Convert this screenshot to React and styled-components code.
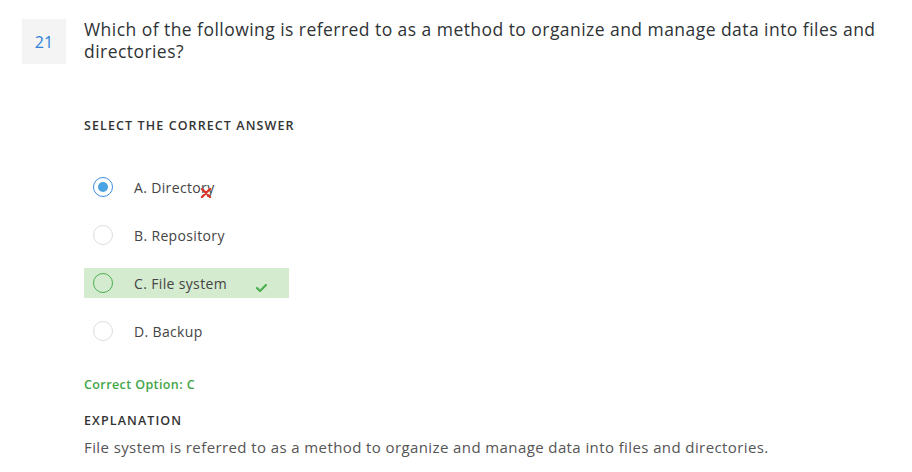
import React from "react";
import styled, { createGlobalStyle } from "styled-components";

const GlobalStyle = createGlobalStyle`
  body {
    margin: 0;
    background: #fff;
    font-family: "Open Sans", "Liberation Sans", sans-serif;
    color: #333;
  }
`;

const Page = styled.div`
  display: flex;
  gap: 18px;
  padding: 19px 0 0 22px;
`;

const NumberBox = styled.div`
  flex: 0 0 44px;
  height: 45px;
  background: #f4f4f4;
  color: #2f80d8;
  font-size: 16px;
  display: flex;
  align-items: center;
  justify-content: center;
`;

const Body = styled.div`
  flex: 1;
  padding-right: 24px;
`;

const Question = styled.div`
  font-size: 17.5px;
  line-height: 22px;
  letter-spacing: 0.45px;
  color: #2f3336;
  margin-top: -1px;
`;

const Label = styled.div`
  font-size: 12.5px;
  font-weight: 600;
  letter-spacing: 1.1px;
  text-transform: uppercase;
  color: #333;
  margin-top: ${(p) => p.top}px;
`;

const Options = styled.div`
  display: flex;
  flex-direction: column;
  gap: 18px;
  margin-top: 38px;
`;

const Option = styled.div`
  position: relative;
  display: flex;
  align-items: center;
  gap: 21px;
  width: 205px;
  height: 30px;
  padding-left: 9px;
  box-sizing: border-box;
  background: ${(p) => (p.correct ? "#d5ebd0" : "transparent")};
`;

const Radio = styled.span`
  width: 20px;
  height: 20px;
  box-sizing: border-box;
  border-radius: 50%;
  border: 1.5px solid ${(p) => (p.state === "selected" ? "#3a8fe4" : p.state === "correct" ? "#4caf50" : "#ddd")};
  display: flex;
  align-items: center;
  justify-content: center;
  &::after {
    content: "";
    width: 10px;
    height: 10px;
    border-radius: 50%;
    background: ${(p) => (p.state === "selected" ? "#4aa3e2" : "transparent")};
  }
`;

const OptionText = styled.span`
  font-size: 14px;
  letter-spacing: 0.35px;
  color: #444;
  position: relative;
`;

const Mark = styled.svg`
  position: absolute;
`;

const CorrectOption = styled.div`
  margin-top: 30px;
  font-size: 12.5px;
  font-weight: 600;
  color: #3fa648;
  letter-spacing: 0.4px;
`;

const Explanation = styled.div`
  margin-top: 8px;
  font-size: 15px;
  letter-spacing: 0.4px;
  color: #555;
`;

const options = [
  { key: "A", text: "Directory", state: "selected", wrong: true },
  { key: "B", text: "Repository" },
  { key: "C", text: "File system", state: "correct", correct: true },
  { key: "D", text: "Backup" },
];

export default function App() {
  return (
    <Page>
      <GlobalStyle />
      <NumberBox>21</NumberBox>
      <Body>
        <Question>
          Which of the following is referred to as a method to organize and manage data into files and directories?
        </Question>
        <Label top={55}>Select the correct answer</Label>
        <Options>
          {options.map((o) => (
            <Option key={o.key} correct={o.correct}>
              <Radio state={o.state} />
              <OptionText>
                {o.key}. {o.text}
                {o.wrong && (
                  <Mark width="12" height="10" viewBox="0 0 12 10" style={{ right: 3, top: 10 }}>
                    <path d="M2 1 L10 9 M10 1 L2 9" stroke="#d9342b" strokeWidth="2.4" strokeLinecap="round" />
                  </Mark>
                )}
              </OptionText>
              {o.correct && (
                <Mark width="11" height="8" viewBox="0 0 11 8" style={{ left: 172, top: 16 }}>
                  <path d="M1 4 L4 7 L10 1" stroke="#4caf50" strokeWidth="2.2" fill="none" strokeLinecap="round" />
                </Mark>
              )}
            </Option>
          ))}
        </Options>
        <CorrectOption>Correct Option: C</CorrectOption>
        <Label top={19}>Explanation</Label>
        <Explanation>File system is referred to as a method to organize and manage data into files and directories.</Explanation>
      </Body>
    </Page>
  );
}
